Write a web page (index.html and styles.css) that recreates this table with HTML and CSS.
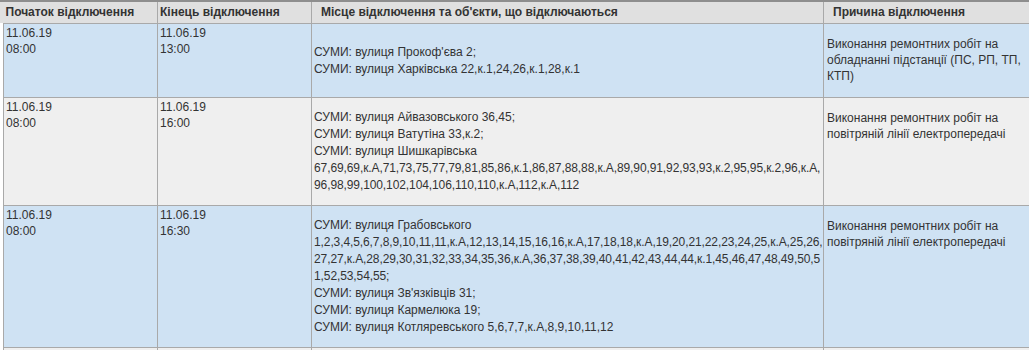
FILE: index.html
```html
<!DOCTYPE html>
<html lang="uk">
<head>
<meta charset="utf-8">
<title>Графік відключень</title>
<link rel="stylesheet" href="styles.css">
</head>
<body>
<div class="wrap">
<table class="outages">
  <colgroup>
    <col class="c-start">
    <col class="c-end">
    <col class="c-place">
    <col class="c-reason">
  </colgroup>
  <thead>
    <tr>
      <th class="th-narrow">Початок відключення</th>
      <th class="th-narrow">Кінець відключення</th>
      <th class="th-wide">Місце відключення та об'єкти, що відключаються</th>
      <th class="th-wide">Причина відключення</th>
    </tr>
  </thead>
  <tbody>
    <tr class="row-blue">
      <td class="time">11.06.19<br>08:00</td>
      <td class="time">11.06.19<br>13:00</td>
      <td class="place">СУМИ: вулиця Прокоф'єва 2;<br>СУМИ: вулиця Харківська 22,к.1,24,26,к.1,28,к.1</td>
      <td class="reason">Виконання ремонтних робіт на обладнанні підстанції (ПС, РП, ТП, КТП)</td>
    </tr>
    <tr class="row-gray">
      <td class="time">11.06.19<br>08:00</td>
      <td class="time">11.06.19<br>16:00</td>
      <td class="place">СУМИ: вулиця Айвазовського 36,45;<br>СУМИ: вулиця Ватутіна 33,к.2;<br>СУМИ: вулиця Шишкарівська<br><span class="nums">67,69,69,к.А,71,73,75,77,79,81,85,86,к.1,86,87,88,88,к.А,89,90,91,92,93,93,к.2,95,95,к.2,96,к.А,<br>96,98,99,100,102,104,106,110,110,к.А,112,к.А,112</span></td>
      <td class="reason">Виконання ремонтних робіт на повітряній лінії електропередачі</td>
    </tr>
    <tr class="row-blue">
      <td class="time">11.06.19<br>08:00</td>
      <td class="time">11.06.19<br>16:30</td>
      <td class="place">СУМИ: вулиця Грабовського<br><span class="nums">1,2,3,4,5,6,7,8,9,10,11,11,к.А,12,13,14,15,16,16,к.А,17,18,18,к.А,19,20,21,22,23,24,25,к.А,25,26,<br>27,27,к.А,28,29,30,31,32,33,34,35,36,к.А,36,37,38,39,40,41,42,43,44,44,к.1,45,46,47,48,49,50,5<br>1,52,53,54,55;</span><br>СУМИ: вулиця Зв'язківців 31;<br>СУМИ: вулиця Кармелюка 19;<br>СУМИ: вулиця Котляревського 5,6,7,7,к.А,8,9,10,11,12</td>
      <td class="reason">Виконання ремонтних робіт на повітряній лінії електропередачі</td>
    </tr>
    <tr class="row-gray row-next">
      <td class="time"></td>
      <td class="time"></td>
      <td class="place"></td>
      <td class="reason"></td>
    </tr>
  </tbody>
</table>
</div>
</body>
</html>
```

FILE: styles.css
```css
html, body {
  margin: 0;
  padding: 0;
  background: #ffffff;
}

body {
  font-family: "Liberation Sans", Arial, sans-serif;
  font-size: 12px;
  color: #333333;
  overflow: hidden;
}

.wrap {
  border-top: 2px solid #8e8e8e;
  padding-left: 3px;
  background: linear-gradient(#e0e0e0, #e0e0e0) no-repeat 0 0 / 100% 21px;
}

.outages {
  border-collapse: collapse;
  table-layout: fixed;
  width: 1026px;
}

.c-start { width: 154px; }
.c-end { width: 154px; }
.c-place { width: 512px; }
.c-reason { width: 206px; }

.outages th,
.outages td {
  border: 1px solid #a9a9a9;
  text-align: left;
}

.outages thead th {
  border-top: 0;
  background: #e0e0e0;
  font-weight: bold;
  line-height: 17px;
  height: 17px;
  padding: 2px 2px 2px 2px;
  white-space: nowrap;
  color: #333333;
}

.outages thead th:first-child {
  border-left: 0;
}

.outages thead th.th-wide {
  padding-left: 9px;
}

.row-blue td { background: #cfe2f3; }
.row-gray td { background: #efefef; }

.time {
  vertical-align: top;
  line-height: 16px;
  padding: 1px 2px 0 2px;
}

.place {
  vertical-align: middle;
  line-height: 17px;
  padding: 11px 2px;
  white-space: nowrap;
  overflow: hidden;
}

.nums {
  letter-spacing: -0.1px;
}

.reason {
  vertical-align: top;
  line-height: 16px;
  padding: 12px 3px 13px 3px;
}

.row-next td {
  height: 40px;
}
```
